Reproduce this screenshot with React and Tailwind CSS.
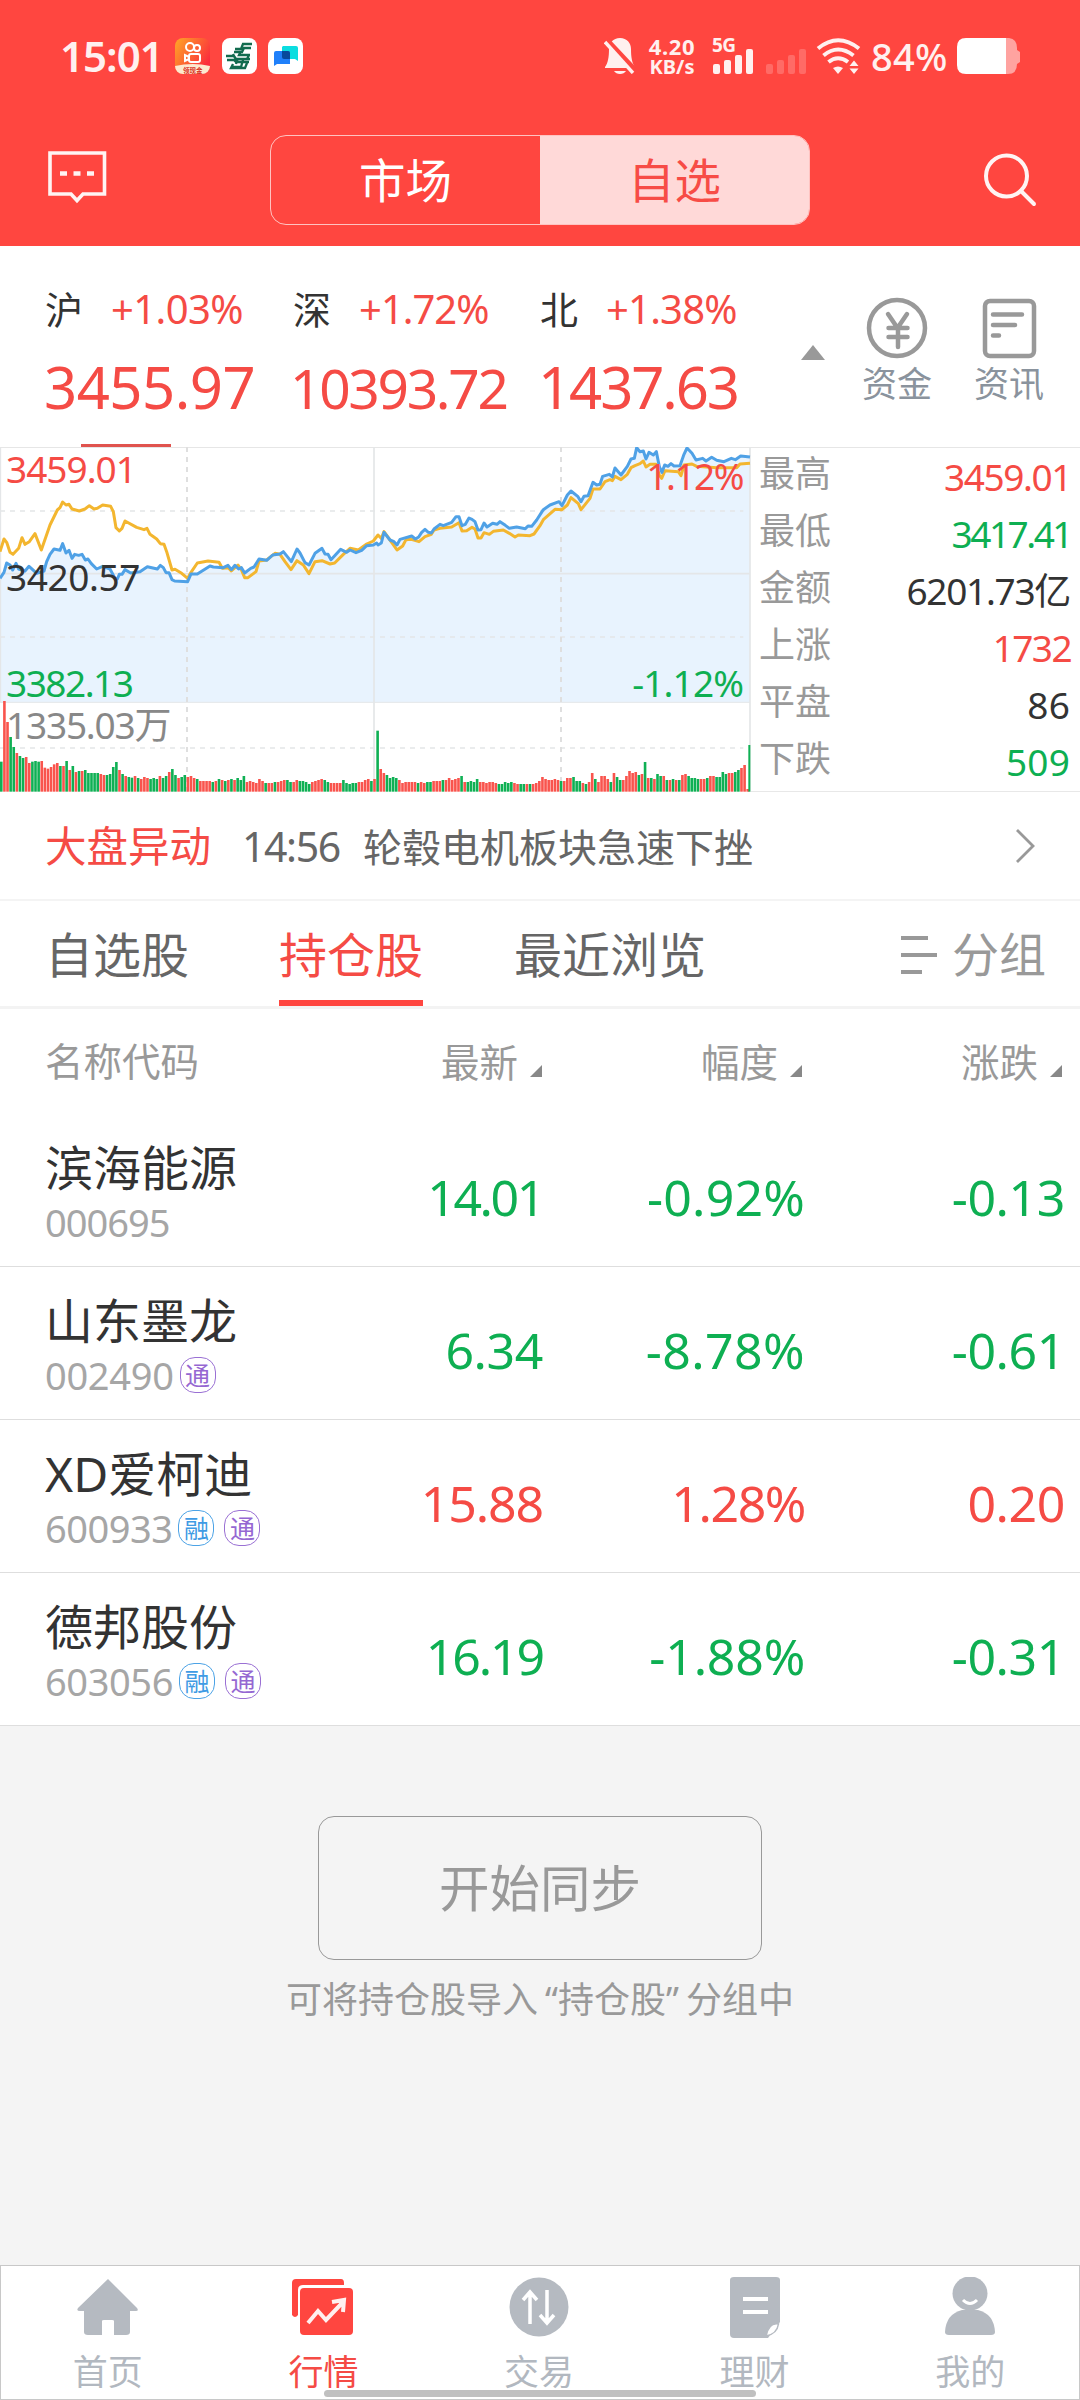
import React from "react";

const MORNING_INDEX = [
  [0, 430], [12, 412], [20, 384], [30, 390], [38, 405], [48, 385], [56, 402], [75, 408], [87, 394], [98, 404],
  [110, 415], [132, 408], [140, 380], [150, 358], [162, 342], [180, 346], [188, 326], [198, 354], [207, 346],
  [216, 370], [224, 358], [236, 361], [246, 358], [256, 375], [264, 372], [274, 386], [290, 402], [308, 394],
  [330, 402], [345, 430], [352, 432], [358, 418], [366, 418], [375, 404], [392, 414], [420, 410], [442, 395],
  [472, 402], [481, 391], [490, 398], [498, 413], [507, 413], [516, 434], [524, 438], [563, 440], [573, 417],
  [592, 417], [630, 393], [640, 396], [670, 398], [684, 391], [694, 404], [705, 391], [716, 402], [724, 398],
  [734, 414], [752, 400], [762, 396], [777, 372], [800, 376], [818, 360], [840, 357], [850, 350], [874, 380],
  [891, 342], [900, 354], [915, 383], [927, 390], [945, 355], [966, 340], [975, 357], [984, 358], [993, 374],
  [1022, 343], [1040, 352], [1050, 345], [1068, 353], [1085, 346], [1100, 332], [1120, 330], [1130, 324],
];
const AFTERNOON_INDEX = [
  [24, 330], [34, 324], [42, 292], [60, 315], [72, 320], [81, 330], [90, 313], [125, 303], [136, 312], [146, 306],
  [155, 292], [165, 283], [175, 292], [184, 294], [192, 282], [210, 268], [220, 272], [245, 262], [258, 245],
  [267, 245], [276, 272], [286, 268], [297, 249], [306, 253], [315, 260], [324, 285], [333, 284], [342, 264],
  [351, 276], [368, 265], [381, 268], [390, 260], [406, 271], [418, 280], [440, 276], [466, 281], [474, 273],
  [485, 274], [500, 255], [520, 224], [540, 210], [567, 200], [576, 212], [592, 180], [603, 168], [624, 185],
  [633, 200], [642, 184], [654, 182], [669, 142], [680, 150], [690, 148], [698, 124], [718, 118], [727, 126],
  [735, 99], [753, 120], [772, 94], [783, 72], [793, 70], [800, 38], [810, 50], [820, 48], [828, 72], [837, 52],
  [850, 60], [859, 50], [868, 95], [876, 112], [884, 90], [894, 94], [903, 86], [912, 93], [930, 92], [942, 58],
  [951, 39], [966, 55], [978, 75], [998, 70], [1008, 78], [1025, 67], [1040, 76], [1062, 80], [1084, 70],
  [1096, 74], [1112, 63], [1140, 66],
];
const MORNING_AVERAGE = [
  [0, 350], [12, 312], [20, 322], [30, 352], [39, 358], [56, 340], [66, 308], [75, 328], [88, 320], [105, 296],
  [124, 345], [150, 270], [172, 225], [180, 218], [188, 201], [198, 210], [207, 208], [216, 222], [238, 228],
  [255, 222], [268, 212], [282, 222], [292, 220], [308, 210], [332, 214], [340, 230], [348, 278], [358, 288],
  [366, 280], [375, 258], [410, 277], [432, 284], [441, 280], [450, 298], [470, 312], [481, 326], [492, 328],
  [500, 350], [516, 405], [525, 403], [545, 415], [563, 430], [573, 412], [592, 384], [624, 378], [657, 382],
  [667, 400], [685, 398], [694, 408], [714, 390], [724, 404], [734, 428], [744, 428], [768, 410], [777, 378],
  [800, 375], [825, 355], [840, 358], [855, 380], [873, 404], [891, 377], [910, 390], [927, 416], [945, 380],
  [966, 377], [990, 387], [1004, 384], [1030, 358], [1050, 340], [1075, 345], [1098, 328], [1120, 318],
];
const AFTERNOON_AVERAGE = [
  [24, 300], [34, 310], [42, 290], [60, 315], [81, 345], [98, 333], [108, 314], [124, 313], [147, 320], [165, 305],
  [184, 298], [192, 285], [210, 280], [245, 276], [267, 263], [276, 288], [290, 287], [306, 277], [315, 282],
  [324, 309], [333, 309], [342, 293], [358, 298], [370, 289], [400, 285], [418, 295], [435, 306], [445, 300],
  [480, 302], [492, 297], [510, 272], [520, 254], [555, 223], [576, 224], [592, 210], [603, 188], [625, 206],
  [633, 224], [660, 190], [669, 162], [690, 162], [705, 140], [720, 134], [727, 137], [735, 124], [753, 134],
  [772, 118], [783, 98], [795, 92], [810, 86], [820, 78], [828, 96], [840, 88], [858, 88], [868, 120], [875, 130],
  [885, 107], [925, 110], [933, 122], [942, 90], [966, 87], [980, 94], [1040, 98], [1100, 98], [1110, 87],
  [1140, 85],
];

const AFTERNOON_OFFSET = 1110;
const toPoints = (am, pm) =>
  [...am, ...pm.map(([x, y]) => [x + AFTERNOON_OFFSET, y])].map(([x, y]) => `${x},${y - 36}`).join(" ");
const INDEX_POINTS = toPoints(MORNING_INDEX, AFTERNOON_INDEX);
const AVERAGE_POINTS = toPoints(MORNING_AVERAGE, AFTERNOON_AVERAGE);

const VOLUME = (
  "g90 r272 r209 g164 g134 r116 g107 g101 r104 r86 g90 g92 g90 r92 r72 r69 r74 r82 r86 g77 r77 g92 r65 g77 r59 g62 r62 g65 g56 g56 " +
  "g56 g56 r53 r50 g50 g53 g74 g89 r65 g53 r47 g44 g42 r47 g41 r38 r44 r41 g38 g41 g38 r47 g41 g47 r59 g68 g50 r41 g44 g50 " +
  "r44 r47 r41 g38 r32 r32 r32 r32 g29 r32 g38 r35 g32 r35 g38 r35 g41 g35 g47 r29 r32 r29 r26 r38 r32 g26 r26 r26 g29 r29 " +
  "r32 r35 g35 g29 r29 r35 g32 g32 g29 g23 r29 r32 r35 r38 g35 g29 r26 r26 r26 r26 g35 g26 g23 g26 g26 r29 r29 r35 r38 g32 " +
  "r38 g183 r68 r56 g50 g41 g44 g41 r35 r26 r29 r29 r29 r29 g26 r29 r26 g29 g29 r32 r32 r32 g35 r35 r41 r35 r38 r41 g47 r29 " +
  "g29 g32 g29 g38 r29 r29 r26 r29 r29 r26 g23 g23 g29 g26 g29 r26 r23 g23 g23 r23 g23 r23 r26 r32 r44 r38 r35 r35 r38 r35 " +
  "g32 r32 r41 r41 g44 g32 g32 r26 g23 r29 r56 g38 r29 r47 r47 r38 g29 r56 g44 g35 r35 r47 r62 r56 r59 g50 r53 g89 r41 g41 " +
  "r38 g53 g47 r47 g35 r35 g38 r35 g35 r50 r53 g47 g41 g41 g38 r38 r38 g41 r47 r47 g44 g44 g59 g53 r56 r56 g59 g65 r71 r80 r8"
)
  .split(" ")
  .map((bar) => ({ up: bar[0] === "r", height: Number(bar.slice(1)) }));

function IntradayChart() {
  return (
    <svg className="block h-[345px] w-[751px]" viewBox="0 0 2253 1035" preserveAspectRatio="none">
      <polygon points={`0,766 ${INDEX_POINTS} 2250,766`} fill="#e8f3fe" />
      <g stroke="#e4e6e8" strokeWidth="5" fill="none">
        <path d="M0 380H2250M1122 0V1035" />
        <path d="M0 766H2250" strokeWidth="3" />
        <path d="M0 192H2230M0 570H2230M0 903H2230" strokeDasharray="15 15" />
        <path d="M561 0V1035M1683 0V1035" stroke="#dfdfdf" strokeWidth="6" strokeDasharray="15 15" />
        <path d="M2250 0V1035M1 0V766" />
      </g>
      <g fill="none" strokeWidth="9" strokeLinejoin="round">
        <polyline points={AVERAGE_POINTS} stroke="#f3b62f" />
        <polyline points={INDEX_POINTS} stroke="#4fa1e6" />
      </g>
      {VOLUME.map((bar, i) => (
        <rect
          key={i}
          x={i * 9.33}
          y={1034 - bar.height}
          width="7.8"
          height={bar.height}
          fill={bar.up ? "#f9544d" : "#0fb054"}
        />
      ))}
      <rect x="2245" y="894" width="6" height="140" fill="#0fb054" />
    </svg>
  );
}

const RED = "text-[#f54b45]";
const GREEN = "text-[#0eaf52]";

function StatusBar() {
  return (
    <div className="flex h-28 items-center text-[#fff0ef]">
      <span className="ml-[60px] w-[115px] text-[42px] leading-none font-semibold tracking-[-1px]">15:01</span>
      <svg className="h-9 w-[35px]" viewBox="0 0 35 36">
        <defs>
          <linearGradient id="kw" x1="0" y1="0" x2="1" y2=".6">
            <stop offset="0" stopColor="#ffa726" />
            <stop offset="1" stopColor="#fb2c3d" />
          </linearGradient>
          <clipPath id="kwc"><rect width="35" height="36" rx="8" /></clipPath>
        </defs>
        <g clipPath="url(#kwc)">
          <rect width="35" height="36" fill="url(#kw)" />
          <path d="M0 28Q18 24 35 28V36H0Z" fill="#fde9cf" />
        </g>
        <g fill="none" stroke="#fff" strokeWidth="2">
          <circle cx="15" cy="9" r="4" />
          <circle cx="22" cy="10" r="3" />
          <rect x="14" y="16" width="11" height="8" rx="2" />
          <path d="M14 19L10 17V23L14 21" />
        </g>
        <text x="8" y="34.5" fontSize="6.5" fontWeight="700" fill="#d8321f">领现金</text>
      </svg>
      <svg className="ml-3 h-9 w-[35px]" viewBox="0 0 35 36">
        <rect width="35" height="36" rx="8" fill="#fff" />
        <g fill="none" stroke="#126b4e" strokeWidth="2.3">
          <path d="M30 6H21L19 11H13M29 10H22L20 14H12M4 18H12L14 21H28M5 22H12L14 24H27M28 17H17L19 13M11 16L13 20M16 20L14 26M21 22L19 29H9M25 25L23 30H9L11 26M27 17L25 21" />
        </g>
      </svg>
      <svg className="ml-[11px] h-9 w-[35px]" viewBox="0 0 35 36">
        <rect width="35" height="36" rx="8" fill="#fff" />
        <path d="M15 8H28a2 2 0 0 1 2 2V23L27 21H14V9Z" fill="#0bdde0" />
        <path d="M8 13H20a2 2 0 0 1 2 2V26H9L6 28V15a2 2 0 0 1 2-2Z" fill="#2080fa" />
        <path d="M14 13H20a2 2 0 0 1 2 2V21H16a2 2 0 0 1-2-2Z" fill="#074a9c" />
      </svg>
      <svg className="ml-[301px] h-9 w-8" viewBox="0 0 32 36">
        <path d="M16 0C9 0 5 5 5 11C5 19 4 25 1 29V30H31V29C28 25 27 19 27 11C27 5 23 0 16 0Z" fill="currentColor" />
        <path d="M10 33H22Q20 36 16 36T10 33Z" fill="currentColor" />
        <path d="M3 2L33 34" stroke="#ff4640" strokeWidth="5" />
        <path d="M1 4L29 35" stroke="currentColor" strokeWidth="3.4" />
      </svg>
      <div className="ml-3 flex w-[48px] flex-col items-center text-[22px] font-bold">
        <span className="leading-[22px] tracking-[0.6px]">4.20</span>
        <span className="text-[20px] leading-[20px]">KB/s</span>
      </div>
      <div className="relative ml-[16px] h-9 w-[42px]">
        <span className="absolute top-[-2px] left-0 text-[19px] leading-none font-bold tracking-[-0.5px]">5G</span>
        <svg className="h-9 w-[42px]" viewBox="0 0 42 36" fill="currentColor">
          <rect x="1" y="26" width="7" height="10" rx="2" />
          <rect x="12" y="22" width="7" height="14" rx="2" />
          <rect x="23" y="17" width="7" height="19" rx="2" />
          <rect x="34" y="11" width="7" height="25" rx="2" />
        </svg>
      </div>
      <svg className="ml-[12px] h-9 w-[41px]" viewBox="0 0 41 36" fill="#ff6b66">
        <rect x="0" y="26" width="7" height="10" rx="2" />
        <rect x="11" y="22" width="7" height="14" rx="2" />
        <rect x="22" y="17" width="7" height="19" rx="2" />
        <rect x="33" y="11" width="7" height="25" rx="2" />
      </svg>
      <svg className="ml-[9px] h-9 w-[45px]" viewBox="0 0 45 36" fill="none" stroke="currentColor">
        <g strokeWidth="4">
          <path d="M2 10.5Q22 -6 43 10.5" />
          <path d="M7.500 17.500Q22 5.500 37.500 17.500" />
          <path d="M12.500 24Q22 16.500 32 24" />
        </g>
        <path d="M17 30Q22 27 27 30L22 36Z" fill="currentColor" stroke="none" />
        <path d="M33.500 28L38 22.500L42.500 28ZM33.500 30.500H42.500L38 36Z" fill="currentColor" stroke="none" />
      </svg>
      <span className="ml-[10px] w-[86px] text-[38px] leading-none font-medium tracking-[0.3px]">84%</span>
      <svg className="h-9 w-16" viewBox="0 0 64 36">
        <path d="M49 0H52Q60 1 60 10V12L63 14V24L60 26Q60 36 51 36H49Z" fill="#ffa3a0" />
        <path d="M49 0H9Q0 0 0 9V27Q0 36 9 36H49Z" fill="#fff" />
      </svg>
    </div>
  );
}

function NavBar() {
  return (
    <div className="flex h-[134px] items-start pt-[23px] pr-[43px] pl-[47px]">
      <svg className="mt-[15px] h-14 w-[60px]" viewBox="0 0 60 56" fill="none" stroke="#fff4f3" strokeWidth="3.600">
        <path d="M3 3H57.500V44H36L30 50.500L24 44H3Z" />
        <path d="M13 23.500H20M26.500 23.500H33.500M40 23.500H47" strokeWidth="4.500" />
      </svg>
      <div className="ml-[163px] flex h-[90px] w-[540px] overflow-hidden rounded-2xl border border-[#ffc3c1] text-[46.500px] leading-none">
        <div className="flex flex-1 items-center justify-center text-white">市场</div>
        <div className="flex flex-1 items-center justify-center bg-[#ffd9d8] text-[#f74c46]">自选</div>
      </div>
      <svg className="mt-[17px] ml-auto h-[56px] w-[54px]" viewBox="0 0 54 56" fill="none" stroke="#fff4f3" strokeWidth="4" strokeLinecap="round">
        <circle cx="23.500" cy="24" r="20.500" />
        <path d="M38 39L51 52" />
      </svg>
    </div>
  );
}

function IndexColumn({ name, change, value, changeClass, valueClass, className }) {
  return (
    <div className={`shrink-0 whitespace-nowrap ${className}`}>
      <div className="mt-[42px] flex h-[42px] items-center leading-none">
        <span className="w-[66px] text-[38px] text-[#333]">{name}</span>
        <span className={`text-[40px] ${RED} ${changeClass}`}>{change}</span>
      </div>
      <div className={`mt-[23px] flex h-[68px] items-center leading-none ${RED} ${valueClass}`}>{value}</div>
    </div>
  );
}

function IndexHeader() {
  return (
    <div className="relative flex h-[201px] pl-[45px]">
      <IndexColumn name="沪" change="+1.03%" value="3455.97" className="w-[248px]" changeClass="tracking-[-0.6px]" valueClass="text-[58px] tracking-[-0.5px] -ml-px" />
      <IndexColumn name="深" change="+1.72%" value="10393.72" className="w-[247px]" changeClass="tracking-[-1px]" valueClass="text-[55px] tracking-[-2.300px] -ml-[3px]" />
      <IndexColumn name="北" change="+1.38%" value="1437.63" className="w-[261px]" changeClass="tracking-[-0.8px]" valueClass="text-[58px] tracking-[-2.100px] -ml-[2px]" />
      <svg className="mt-[99px] h-[15px] w-6" viewBox="0 0 24 15"><path d="M12 0L24 15H0Z" fill="#999" /></svg>
      <div className="mt-[51px] ml-[36px] flex w-[72px] flex-col items-center">
        <svg className="h-[62px] w-[62px]" viewBox="0 0 62 62" fill="none" stroke="#999" strokeWidth="4.500" strokeLinecap="round">
          <circle cx="31" cy="31" r="28" />
          <path d="M22 17L31.500 31L41 17M22.500 31H41.500M22.500 40H41.500M32 31V50" />
        </svg>
        <span className="mt-[7px] text-[35px] leading-none text-[#8a939d]">资金</span>
      </div>
      <div className="mt-[51px] ml-[40px] flex w-[72px] flex-col items-center">
        <svg className="h-[62px] w-[62px]" viewBox="0 0 62 62" fill="none" stroke="#999" strokeWidth="4.500" strokeLinecap="round">
          <rect x="7" y="4" width="49" height="55" rx="5" />
          <path d="M15 17.500H44M15 28H37M15 38.500H21" />
        </svg>
        <span className="mt-[7px] text-[35px] leading-none text-[#8a939d]">资讯</span>
      </div>
      <div className="absolute bottom-0 left-[81px] h-[3px] w-[90px] bg-[#e0534e]" />
    </div>
  );
}

const STATS = [
  ["最高", "3459.01", RED, "pr-[9px] tracking-[-1.400px]"],
  ["最低", "3417.41", GREEN, "pr-[9px] tracking-[-2.500px]"],
  ["金额", "6201.73亿", "text-[#333]", "pr-[10px] tracking-[-1.300px]"],
  ["上涨", "1732", RED, "pr-[9px] tracking-[-1.600px]"],
  ["平盘", "86", "text-[#333]", "pr-[10px] tracking-[0.200px]"],
  ["下跌", "509", GREEN, "pr-[10px] tracking-[0.200px]"],
];

function MarketPanel() {
  return (
    <div className="flex h-[345px] border-t border-[#e6e6e6] text-[37px] leading-none">
      <div className="relative w-[751px] shrink-0">
        <div className="-mt-px"><IntradayChart /></div>
        <span className={`absolute top-[2px] left-[6px] tracking-[-1px] ${RED}`}>3459.01</span>
        <span className="absolute top-[110px] left-[6px] tracking-[-0.400px] text-[#333]">3420.57</span>
        <span className={`absolute top-[216px] left-[6px] tracking-[-1.500px] ${GREEN}`}>3382.13</span>
        <span className="absolute top-[258px] left-[6px] tracking-[-1.200px] text-[#888]">1335.03万</span>
        <span className={`absolute top-[9px] right-[8px] tracking-[-1.500px] ${RED}`}>1.12%</span>
        <span className={`absolute top-[216px] right-[8px] tracking-[-0.900px] ${GREEN}`}>-1.12%</span>
      </div>
      <div className="flex flex-1 flex-col border-b border-[#e8e8e8]">
        {STATS.map(([label, value, color, fit]) => (
          <div key={label} className="flex h-[57.400px] items-center justify-between">
            <span className="mt-[-6px] ml-[8px] text-[36px] text-[#999]">{label}</span>
            <span className={`-mt-px ${color} ${fit}`}>{value}</span>
          </div>
        ))}
      </div>
    </div>
  );
}

function NewsRow() {
  return (
    <div className="flex h-[109px] items-center border-b-2 border-[#f4f4f4] pt-[2px] pl-[45px] leading-none">
      <span className={`text-[41.500px] ${RED}`}>大盘异动</span>
      <span className="ml-[31px] w-[121px] text-[41px] tracking-[-1.400px] text-[#666]">14:56</span>
      <span className="text-[39px] text-[#666]">轮毂电机板块急速下挫</span>
      <svg className="mt-[-2px] mr-[44px] ml-auto h-[36px] w-[20px]" viewBox="0 0 20 36" fill="none" stroke="#999" strokeWidth="2.800"><path d="M1 2L17 18L1 34" /></svg>
    </div>
  );
}

function ListTabs() {
  return (
    <div className="flex h-[108px] border-b-[3px] border-[#f3f3f3] text-[48px] leading-none text-[#666]">
      <div className="ml-[45px] flex items-center pt-[2px]">自选股</div>
      <div className={`relative ml-[90px] flex w-[144px] items-center justify-center pt-[2px] ${RED}`}>
        持仓股
        <span className="absolute bottom-0 left-0 h-[6px] w-full bg-[#ff4640]" />
      </div>
      <div className="ml-[91px] flex items-center pt-[2px]">最近浏览</div>
      <div className="ml-auto flex items-center gap-[15px] pt-[2px] pr-[34px] text-[47px] text-[#999]">
        <div className="flex flex-col gap-[13px]">
          <span className="h-1 w-[27px] bg-[#999]" />
          <span className="h-1 w-[36px] bg-[#999]" />
          <span className="h-1 w-[21px] bg-[#999]" />
        </div>
        分组
      </div>
    </div>
  );
}

function SortLabel({ children, className }) {
  return (
    <div className={`mt-[2px] flex items-center justify-end ${className}`}>
      {children}
      <svg className="mt-4 ml-[12px] h-[12px] w-[12px]" viewBox="0 0 12 12"><path d="M12 0V12H0Z" fill="#888" /></svg>
    </div>
  );
}

const HOLDINGS = [
  { name: "滨海能源", code: "000695", price: "14.01", pct: "-0.92%", diff: "-0.13", tags: [], codeFit: "tracking-[-1px]", priceFit: "tracking-[-2.400px]", pctFit: "tracking-[0.200px]" },
  { name: "山东墨龙", code: "002490", price: "6.34", pct: "-8.78%", diff: "-0.61", tags: ["通"], codeFit: "tracking-[-0.300px]", priceFit: "tracking-[-0.400px]", pctFit: "tracking-[0.400px]" },
  { name: "XD爱柯迪", code: "600933", price: "15.88", pct: "1.28%", diff: "0.20", tags: ["融", "通"], codeFit: "tracking-[-0.500px]", priceFit: "tracking-[-1.100px]", pctFit: "tracking-[-1.400px]" },
  { name: "德邦股份", code: "603056", price: "16.19", pct: "-1.88%", diff: "-0.31", tags: ["融", "通"], codeFit: "tracking-[-0.400px]", priceFit: "tracking-[-2.100px]", pctFit: "tracking-[-0.200px]" },
];

function Tag({ children }) {
  const tone = children === "通" ? "border-[#9a70d4] text-[#9567d2]" : "border-[#4ca3e6] text-[#3f9be4]";
  return (
    <span className={`mr-[10px] flex h-9 w-9 items-center justify-center rounded-[15px] border-[1.500px] text-[25px] leading-none ${tone}`}>
      {children}
    </span>
  );
}

function HoldingRow({ item, first }) {
  const tone = item.diff.startsWith("-") ? GREEN : RED;
  return (
    <div className={`flex border-b border-[#dedede] text-[50px] leading-none ${first ? "h-[150px]" : "h-[153px]"}`}>
      <div className="flex w-[303px] flex-col justify-end pb-[25px] pl-[45px] whitespace-nowrap">
        <div className="flex h-[56px] items-center text-[48px] text-[#333]">{item.name}</div>
        <div className="mt-[7px] flex h-[38px] items-center">
          <span className={`mr-[6px] text-[38px] text-[#a6a6a6] ${item.codeFit}`}>{item.code}</span>
          {item.tags.map((tag) => <Tag key={tag}>{tag}</Tag>)}
        </div>
      </div>
      <div className={`flex flex-1 items-end pb-[44px] ${tone}`}>
        <span className={`w-[240px] text-right ${item.priceFit}`}>{item.price}</span>
        <span className={`w-[262px] text-right ${item.pctFit}`}>{item.pct}</span>
        <span className="w-[260px] text-right tracking-[-0.400px]">{item.diff}</span>
      </div>
    </div>
  );
}

function HomeIcon() {
  return <path d="M32 2L2 31Q0 34 4 34H8V55Q8 58 12 58H26V44Q26 43 28 43H36Q38 43 38 44V58H50Q54 58 54 55V34H60Q63 34 61 31Z" fill="#b5bac1" />;
}
function QuoteIcon() {
  return (
    <>
      <path d="M1 38V6Q1 2 5 2H50Q53 2 53 6V8H12Q7 8 7 13V38Q4 42 1 38Z" fill="#ff4640" />
      <rect x="9" y="11" width="53" height="47" rx="4" fill="#ff4640" />
      <path d="M17 46L27 34L35 43L53 24M41 25L53 23L52 35" fill="none" stroke="#fff0ef" strokeWidth="4" />
    </>
  );
}
function TradeIcon() {
  return (
    <>
      <circle cx="32" cy="30" r="29.500" fill="#b5bac1" />
      <path d="M23 47V16M16 23L23 15L30 23M40 13V45M33 38L40 46L47 38" fill="none" stroke="#fff" strokeWidth="3.500" />
    </>
  );
}
function WealthIcon() {
  return (
    <>
      <path d="M7 3Q7 0 11 0H53Q57 0 57 3V45L45 61H11Q7 61 7 57Z" fill="#b5bac1" />
      <path d="M20 22H45M20 35H45" stroke="#fff" strokeWidth="4" />
      <path d="M55.500 47Q46 45 43 59Q54 57 55.500 47Z" fill="#fff" stroke="#b5bac1" strokeWidth="1.500" />
    </>
  );
}
function MineIcon() {
  return (
    <>
      <ellipse cx="32" cy="16.500" rx="17.500" ry="17" fill="#b5bac1" />
      <path d="M24 33H40Q56 37 57 55Q57 58 53 58H11Q7 58 7 55Q8 37 24 33Z" fill="#b5bac1" />
      <path d="M25 23Q32 30 39 23" fill="none" stroke="#fff" strokeWidth="3" />
    </>
  );
}

const NAV_ITEMS = [
  ["首页", HomeIcon], ["行情", QuoteIcon], ["交易", TradeIcon], ["理财", WealthIcon], ["我的", MineIcon],
];

function TabBar() {
  return (
    <div className="relative flex h-[135px] border border-[#c8c8c8] bg-white">
      {NAV_ITEMS.map(([label, Icon]) => (
        <div key={label} className={`flex flex-1 flex-col items-center pr-[2px] ${label === "行情" ? RED : "text-[#b2b8c0]"}`}>
          <svg className="mt-[11px] h-[62px] w-16" viewBox="0 0 64 62"><Icon /></svg>
          <span className="mt-[15px] text-[35px] leading-none">{label}</span>
        </div>
      ))}
      <div className="absolute bottom-[2px] left-[323px] h-[7px] w-[432px] rounded-full bg-[#c0c0c0]" />
    </div>
  );
}

export default function App() {
  return (
    <div className="flex h-[2400px] w-[1080px] flex-col overflow-hidden bg-[#f4f4f4] font-['Noto_Sans','Noto_Sans_CJK_SC',sans-serif]">
      <header className="shrink-0 bg-[#ff4640]">
        <StatusBar />
        <NavBar />
      </header>
      <main className="flex flex-1 flex-col">
        <section className="bg-white">
          <IndexHeader />
          <MarketPanel />
          <NewsRow />
          <ListTabs />
          <div className="flex h-[108px] items-center pb-[3px] text-[38.500px] leading-none text-[#999]">
            <div className="w-[303px] pl-[45px]">名称代码</div>
            <SortLabel className="w-[239px]">最新</SortLabel>
            <SortLabel className="w-[260px]">幅度</SortLabel>
            <SortLabel className="w-[260px]">涨跌</SortLabel>
          </div>
          {HOLDINGS.map((item, i) => <HoldingRow key={item.code} item={item} first={i === 0} />)}
        </section>
        <section className="flex flex-col items-center pt-[90px] text-[#999]">
          <button className="h-[144px] w-[444px] rounded-2xl border border-[#999] text-[50.500px] leading-none">开始同步</button>
          <p className="mt-[22px] flex text-[36px] leading-none">
            <span>可将持仓股导入</span>
            <span className="w-5 text-right">“</span>
            <span>持仓股</span>
            <span className="w-5">”</span>
            <span>分组中</span>
          </p>
        </section>
      </main>
      <TabBar />
    </div>
  );
}
